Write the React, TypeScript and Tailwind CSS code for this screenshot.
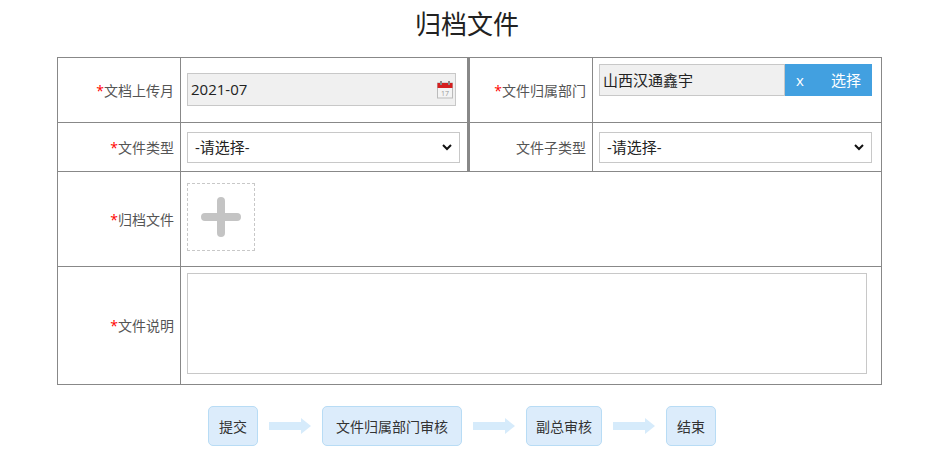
import React from "react";

const Star = () => <span className="text-[#ff0000]">*</span>;

const Arrow = () => (
  <svg width="42" height="16" viewBox="0 0 42 16" className="mx-[11px]">
    <rect x="0" y="4" width="32" height="8" fill="#d6ebfb" />
    <polygon points="32,0 42,8 32,16" fill="#d6ebfb" />
  </svg>
);

const Box = ({ t, w }: { t: string; w: string }) => (
  <div className={`h-[40px] ${w} flex items-center justify-center rounded-[5px] border border-[#b8dcf5] bg-[#dcecfb] text-[14px] text-[#333]`}>{t}</div>
);

const Select = ({ w }: { w: string }) => (
  <div className={`h-[31px] ${w} border border-[#c8c8c8] bg-white flex items-center justify-between px-[7px] text-[15px] text-[#222]`}>
    <span>-请选择-</span>
    <svg width="10" height="7" viewBox="0 0 10 7"><path d="M1 1l4 4 4-4" stroke="#111" strokeWidth="2" fill="none" /></svg>
  </div>
);

export default function App() {
  const lab = "border border-[#888] text-right pr-[6px] text-[14px] text-[#555] align-middle";
  const val = "border border-[#888] px-[6px]";
  return (
    <div className="w-[934px] h-[463px] bg-white" style={{ fontFamily: '"Open Sans","Noto Sans CJK SC",sans-serif' }}>
      <div className="h-[57px] flex items-center justify-center text-[26px] text-[#222] pb-[8px]">归档文件</div>
      <table className="ml-[57px] w-[824px] border-collapse table-fixed">
        <colgroup>
          <col className="w-[123px]" />
          <col className="w-[288px]" />
          <col className="w-[124px]" />
          <col className="w-[289px]" />
        </colgroup>
        <tbody>
          <tr className="h-[65px]">
            <td className={lab}><Star />文档上传月</td>
            <td className={`${val} align-top pt-[15px]`}>
              <div className="h-[33px] w-[269px] border border-[#c8c8c8] bg-[#f0f0f0] flex items-center justify-between pl-[3px] pr-[2px] text-[15px] text-[#222]">
                <span>2021-07</span>
                <svg width="16" height="18" viewBox="0 0 16 18">
                  <rect x="0.5" y="2" width="15" height="15" fill="#f4f4f4" stroke="#bbb" />
                  <rect x="0.5" y="2" width="15" height="5" fill="#d42020" />
                  <rect x="3" y="0" width="2" height="4" fill="#888" />
                  <rect x="11" y="0" width="2" height="4" fill="#888" />
                  <text x="4" y="15" fontSize="7" fill="#999">17</text>
                </svg>
              </div>
            </td>
            <td className={`${lab} border-l-[3px]`}><Star />文件归属部门</td>
            <td className={`${val} align-top pt-[6px]`}>
              <div className="flex h-[32px] w-[273px]">
                <div className="w-[186px] border border-[#c8c8c8] bg-[#f0f0f0] flex items-center pl-[3px] text-[15px] text-[#222]">山西汉通鑫宇</div>
                <div className="flex-1 bg-[#42a0e0] flex items-center text-white text-[15px] pr-[11px]">
                  <span className="ml-[11px]">x</span>
                  <span className="ml-auto">选择</span>
                </div>
              </div>
            </td>
          </tr>
          <tr className="h-[49px]">
            <td className={lab}><Star />文件类型</td>
            <td className={`${val} align-middle`}><Select w="w-[273px]" /></td>
            <td className={`${lab} border-l-[3px]`}>文件子类型</td>
            <td className={`${val} align-middle`}><Select w="w-[273px]" /></td>
          </tr>
          <tr className="h-[95px]">
            <td className={lab}><Star />归档文件</td>
            <td className={`${val} align-top pt-[11px]`} colSpan={3}>
              <div className="w-[68px] h-[68px] border border-dashed border-[#c8c8c8] flex items-center justify-center">
                <svg width="42" height="42" viewBox="0 0 42 42">
                  <path d="M21 5v32M5 21h32" stroke="#c4c4c4" strokeWidth="8" strokeLinecap="round" />
                </svg>
              </div>
            </td>
          </tr>
          <tr className="h-[118px]">
            <td className={lab}><Star />文件说明</td>
            <td className={`${val} align-top pt-[6px] pr-[14px]`} colSpan={3}>
              <div className="h-[101px] border border-[#c8c8c8]" />
            </td>
          </tr>
        </tbody>
      </table>
      <div className="flex items-center mt-[21px] ml-[208px]">
        <Box t="提交" w="w-[50px]" />
        <Arrow />
        <Box t="文件归属部门审核" w="w-[140px]" />
        <Arrow />
        <Box t="副总审核" w="w-[76px]" />
        <Arrow />
        <Box t="结束" w="w-[50px]" />
      </div>
    </div>
  );
}
